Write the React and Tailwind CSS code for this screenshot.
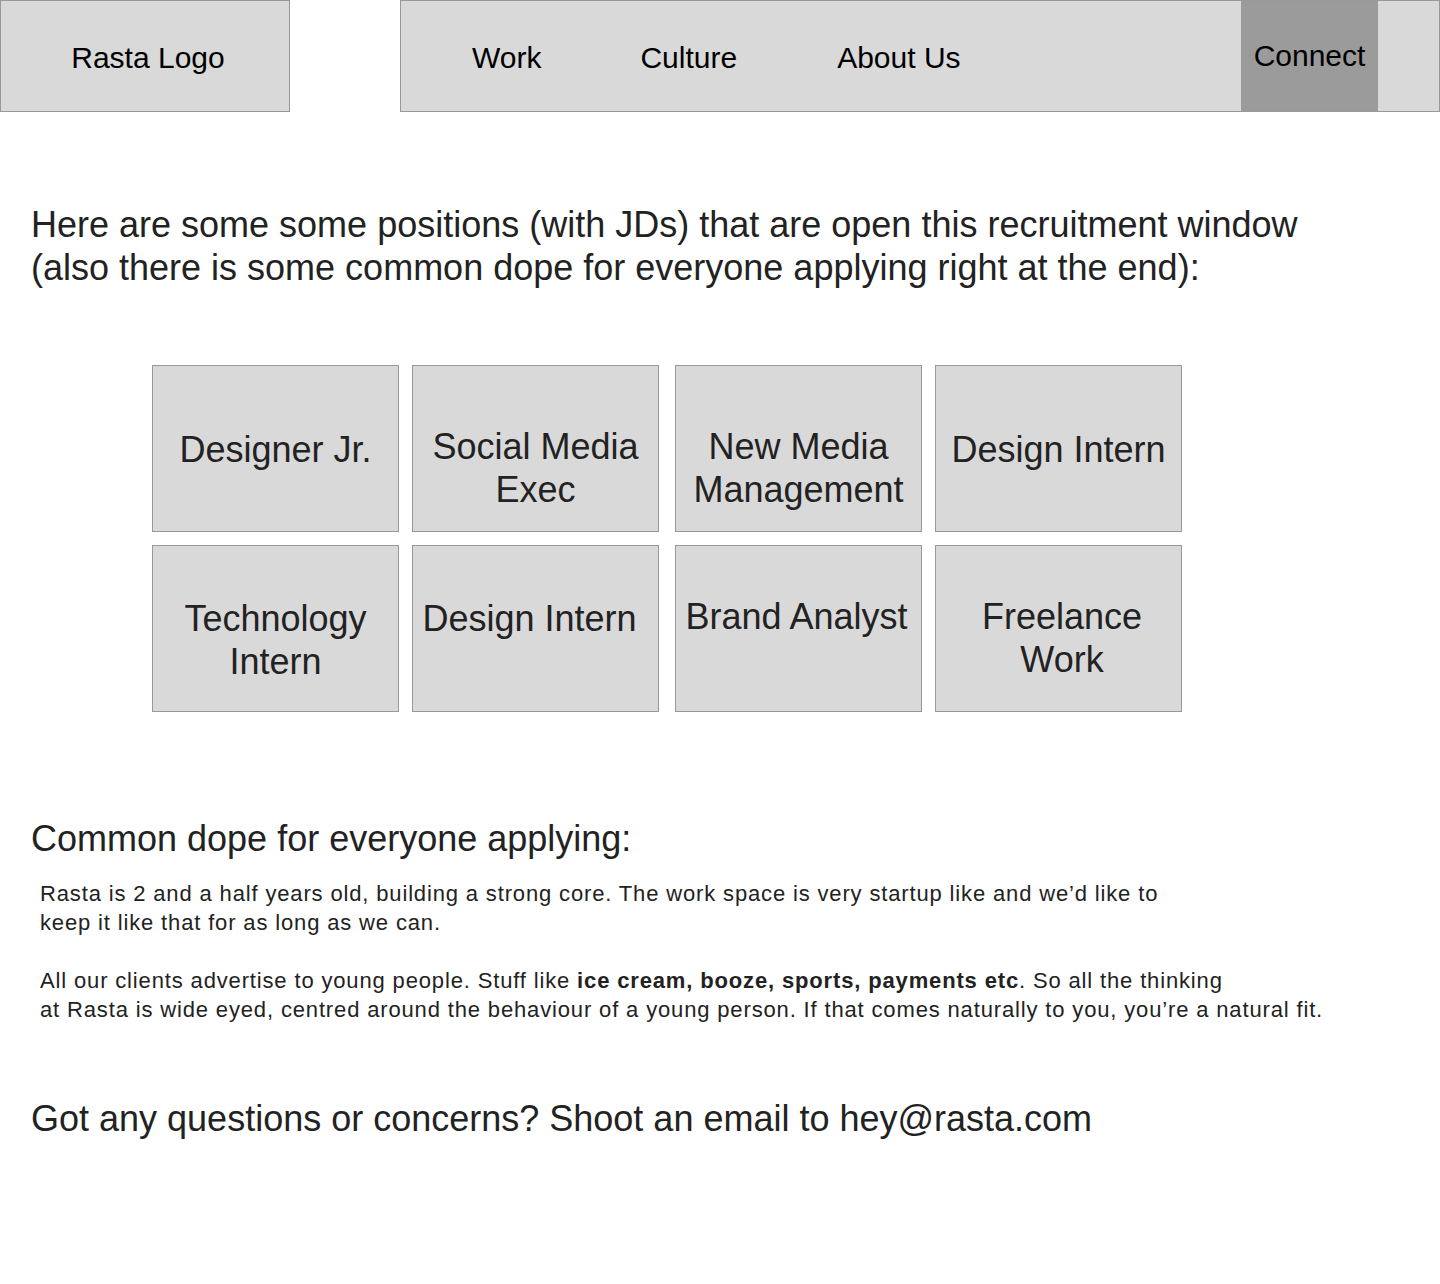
export default function App() {
  const jobs = [
    { lines: ["Designer Jr."], cls: "pt-[62px]" },
    { lines: ["Social Media", "Exec"], cls: "pt-[59px]" },
    { lines: ["New Media", "Management"], cls: "pt-[59px]" },
    { lines: ["Design Intern"], cls: "pt-[62px]" },
    { lines: ["Technology", "Intern"], cls: "pt-[51px]" },
    { lines: ["Design Intern"], cls: "pt-[51px] pr-[12px]" },
    { lines: ["Brand Analyst"], cls: "pt-[49px] pr-[4px]" },
    { lines: ["Freelance", "Work"], cls: "pt-[49px] pl-[7px]" },
  ];
  return (
    <div className="min-h-[1284px] bg-white text-[#222] font-['Liberation_Sans',Arial,sans-serif]">
      <header className="flex h-[112px]">
        <div className="w-[290px] h-full border border-[#999] bg-[#d9d9d9] flex items-center justify-center pt-[3px] pl-[6px] text-[30px] text-black">
          Rasta Logo
        </div>
        <nav className="ml-[110px] flex-1 h-full border border-[#999] bg-[#d9d9d9] flex items-center text-[30px] text-black">
          <div className="pl-[71px] pt-[3px] flex items-center">
            <span>Work</span>
            <span className="ml-[99px]">Culture</span>
            <span className="ml-[100px]">About Us</span>
          </div>
          <div className="ml-auto mr-[61px] w-[137px] h-full bg-[#9b9b9b] flex items-center justify-center pb-[2px]">
            Connect
          </div>
        </nav>
      </header>

      <h1 className="mt-[91px] ml-[31px] text-[36px] leading-[43px] font-normal">
        Here are some some positions (with JDs) that are open this recruitment window
        <br />
        (also there is some common dope for everyone applying right at the end):
      </h1>

      <div className="mt-[76px] ml-[152px] grid grid-cols-[247px_250px_247px_247px] gap-x-[13px] gap-y-[13px]">
        {jobs.map((job, i) => (
          <div
            key={i}
            className={`w-[247px] h-[167px] border border-[#999] bg-[#d9d9d9] flex flex-col items-center justify-start text-[36px] leading-[43px] text-center ${job.cls}`}
          >
            {job.lines.map((l, j) => (
              <span key={j}>{l}</span>
            ))}
          </div>
        ))}
      </div>

      <h2 className="mt-[105px] ml-[31px] text-[36px] leading-[43px] font-normal">
        Common dope for everyone applying:
      </h2>

      <div className="mt-[19px] ml-[40px] text-[22px] leading-[29px] tracking-[0.85px]">
        <p>
          Rasta is 2 and a half years old, building a strong core. The work space is very startup like and we’d like to
          <br />
          keep it like that for as long as we can.
        </p>
        <p className="mt-[29px]">
          All our clients advertise to young people. Stuff like <b>ice cream, booze, sports, payments etc</b>. So all the thinking
          <br />
          at Rasta is wide eyed, centred around the behaviour of a young person. If that comes naturally to you, you’re a natural fit.
        </p>
      </div>

      <p className="mt-[73px] ml-[31px] text-[36px] leading-[43px]">
        Got any questions or concerns? Shoot an email to hey@rasta.com
      </p>
    </div>
  );
}
